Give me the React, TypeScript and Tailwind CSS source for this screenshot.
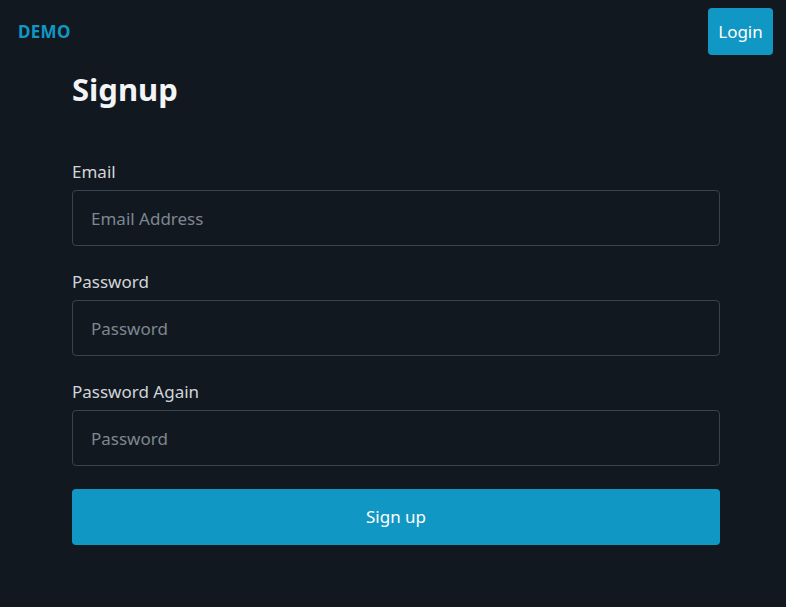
export default function App() {
  return (
    <div
      className="min-h-[607px] w-full bg-[#121820] text-[#e5e7eb]"
      style={{ fontFamily: '"Noto Sans", "Open Sans", sans-serif' }}
    >
      <header className="flex h-[63px] items-start justify-between pl-[18px] pr-[13px]">
        <span className="mt-[20px] text-[17px] font-bold leading-[24px] tracking-[0.3px] text-[#1197c4]">
          DEMO
        </span>
        <button className="mt-[8px] h-[47px] w-[65px] rounded-[4px] bg-[#1197c4] text-[17px] text-white">
          Login
        </button>
      </header>
      <main className="ml-[72px] w-[648px]">
        <h1 className="mt-[6px] text-[31px] font-bold leading-[40px] text-[#f3f4f6]">Signup</h1>
        <form className="mt-[51px] flex flex-col">
          <label className="text-[17px] leading-[24px] text-[#d1d5db]">Email</label>
          <input
            placeholder="Email Address"
            className="mt-[6px] h-[56px] rounded-[4px] border border-[#374351] bg-transparent px-[18px] text-[17px] text-white outline-none placeholder:text-[#7d8791]"
          />
          <label className="mt-[24px] text-[17px] leading-[24px] text-[#d1d5db]">Password</label>
          <input
            type="password"
            placeholder="Password"
            className="mt-[6px] h-[56px] rounded-[4px] border border-[#374351] bg-transparent px-[18px] text-[17px] text-white outline-none placeholder:text-[#7d8791]"
          />
          <label className="mt-[24px] text-[17px] leading-[24px] text-[#d1d5db]">Password Again</label>
          <input
            type="password"
            placeholder="Password"
            className="mt-[6px] h-[56px] rounded-[4px] border border-[#374351] bg-transparent px-[18px] text-[17px] text-white outline-none placeholder:text-[#7d8791]"
          />
          <button
            type="button"
            className="mt-[23px] h-[56px] rounded-[4px] bg-[#1197c4] text-[17px] text-white"
          >
            Sign up
          </button>
        </form>
      </main>
    </div>
  );
}
